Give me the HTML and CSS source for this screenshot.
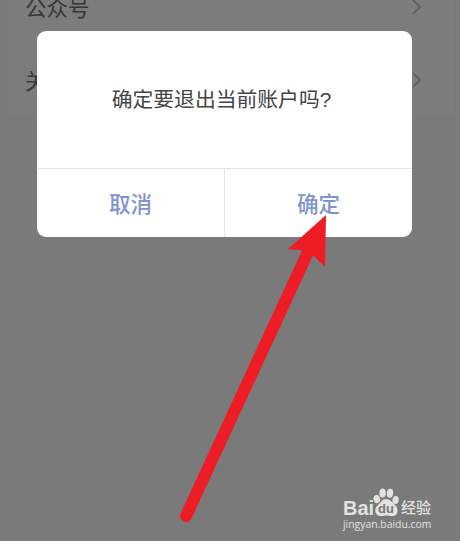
FILE: index.html
```html
<!DOCTYPE html>
<html lang="zh-CN">
<head>
    <meta charset="UTF-8">
    <meta name="viewport" content="width=device-width, initial-scale=1.0">
    <title>退出账户</title>
    <link rel="stylesheet" href="styles.css">
</head>
<body>
    <div class="screen">
        <div class="list">
            <div class="row">
                <span>公众号</span>
                <svg class="chevron" width="10" height="16" viewBox="0 0 10 16"><path d="M1 1l7 7-7 7"/></svg>
            </div>
            <div class="row">
                <span>关</span>
                <svg class="chevron" width="10" height="16" viewBox="0 0 10 16"><path d="M1 1l7 7-7 7"/></svg>
            </div>
        </div>

        <div class="dialog">
            <p class="message">确定要退出当前账户吗?</p>
            <div class="actions">
                <button>取消</button>
                <button>确定</button>
            </div>
        </div>

        <svg class="arrow" width="460" height="541" viewBox="0 0 460 541">
            <path class="shaft" d="M186 516L308 252"/>
            <path class="head" d="M326 215L287.500 249.500L302 250L314 256L325 267Z"/>
        </svg>

        <div class="watermark">
            <div class="brand">
                <span class="bai">Bai</span>
                <span class="paw">
                    <svg width="26" height="29" viewBox="0 0 26 29">
                        <ellipse cx="3.800" cy="11" rx="3.200" ry="4.200" transform="rotate(-12 3.800 11)"/>
                        <ellipse cx="9.600" cy="5" rx="3.200" ry="4.500"/>
                        <ellipse cx="17" cy="5.200" rx="3.200" ry="4.500" transform="rotate(8 17 5.200)"/>
                        <ellipse cx="22.600" cy="12" rx="3.100" ry="4" transform="rotate(12 22.600 12)"/>
                        <path d="M13 11c-4 0-5 3.500-8.500 6.500C1 20.500 1.500 27.500 7 28c3 .3 4-.4 6-.4s4 .7 7 .4c5.500-.5 5.500-7.500 2.500-10.500C19.500 14.500 17 11 13 11z"/>
                    </svg>
                    <span class="du">du</span>
                </span>
                <span class="jingyan">经验</span>
            </div>
            <div class="url">jingyan.baidu.com</div>
        </div>
    </div>
</body>
</html>
```

FILE: styles.css
```css
* {
    box-sizing: border-box;
}
body {
    margin: 0;
    font-family: "Liberation Sans", "Noto Sans CJK SC", sans-serif;
    background: #7a7a7a;
}
.screen {
    position: relative;
    height: 541px;
    overflow: hidden;
}
.list {
    margin: -30px 6px 0 7px;
    background: #7c7c7c;
}
.row {
    display: flex;
    align-items: center;
    justify-content: space-between;
    height: 73px;
    padding: 0 32px 0 18px;
    font-size: 21.5px;
    color: #363636;
}
.chevron {
    fill: none;
    stroke: #5c5c5c;
    stroke-width: 1.6;
}

/* dialog */
.dialog {
    position: absolute;
    top: 31px;
    left: 37px;
    width: 375px;
    height: 206px;
    display: flex;
    flex-direction: column;
    background: #fefefe;
    border-radius: 9px;
    overflow: hidden;
}
.message {
    flex: 1;
    display: flex;
    align-items: center;
    justify-content: center;
    margin: 0;
    padding: 0 6px 3px 0;
    font-size: 20.8px;
    color: #454545;
}
.actions {
    display: flex;
    height: 69px;
    border-top: 1px solid #e4e4e4;
}
button {
    flex: 1;
    padding: 0 0 2px;
    border: none;
    background: none;
    font-family: inherit;
    font-size: 21.5px;
    font-weight: 500;
    color: #7f93d0;
}
button + button {
    border-left: 1px solid #e4e4e4;
}

/* pointer arrow */
.arrow {
    position: absolute;
    top: 0;
    left: 0;
}
.shaft {
    fill: none;
    stroke: #ee1c24;
    stroke-width: 12;
    stroke-linecap: round;
}
.head {
    fill: #ee1c24;
}

/* watermark */
.watermark {
    position: absolute;
    top: 487px;
    left: 343px;
    color: #e2e2e2;
}
.brand {
    display: flex;
    align-items: flex-end;
    height: 30px;
}
.bai {
    width: 30px;
    font-size: 20px;
    font-weight: bold;
    line-height: 18px;
}
.paw {
    position: relative;
    width: 26px;
    height: 29px;
}
.paw svg {
    display: block;
    fill: #e2e2e2;
}
.du {
    position: absolute;
    left: 5px;
    bottom: 1px;
    font-size: 13px;
    font-weight: bold;
    line-height: 14px;
    color: #777;
}
.jingyan {
    margin-left: 2px;
    font-size: 15px;
    font-weight: 500;
    line-height: 18px;
}
.url {
    font-family: "Open Sans", sans-serif;
    font-size: 10.4px;
    line-height: 14px;
}
```
